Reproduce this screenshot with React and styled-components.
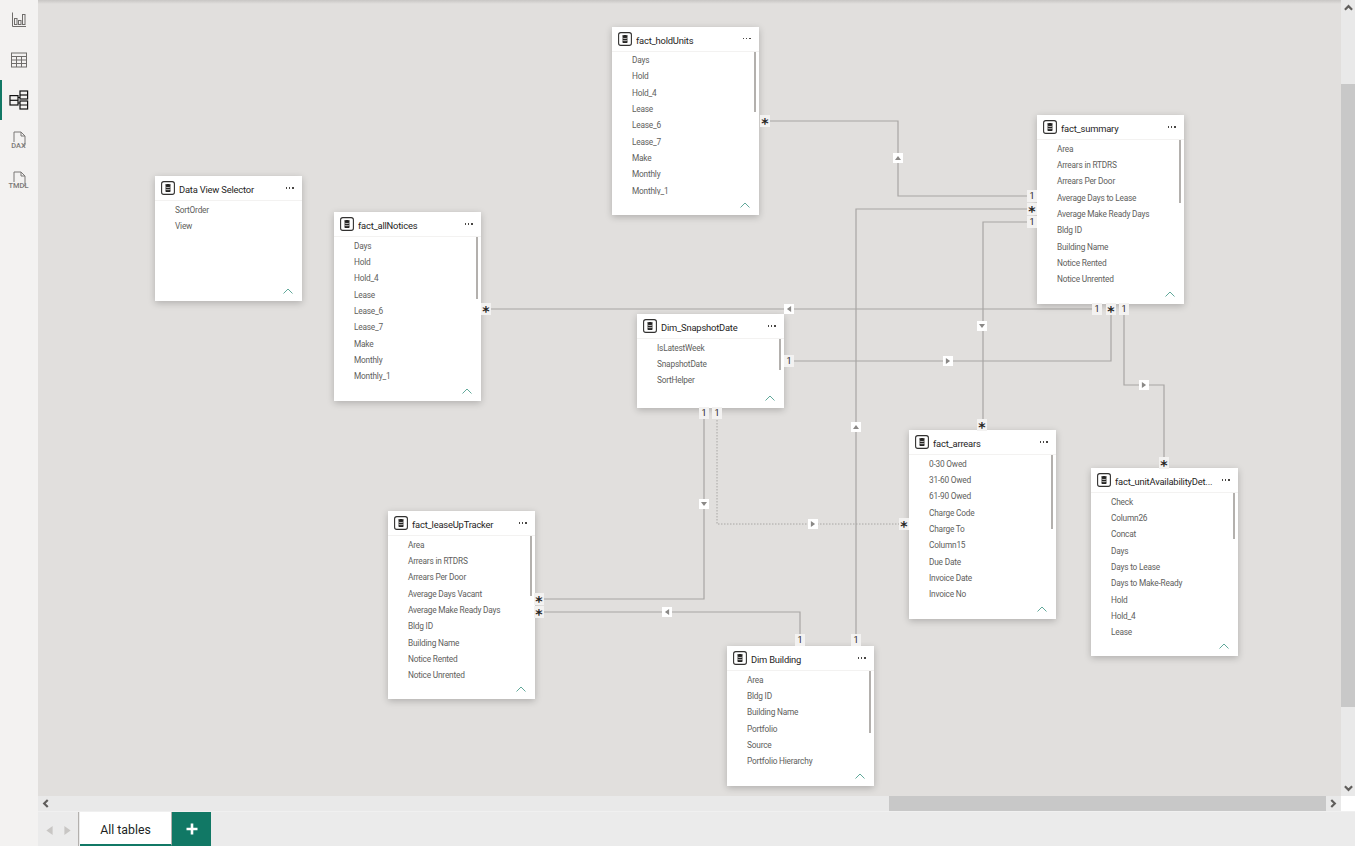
import React from 'react'
import styled, { createGlobalStyle } from 'styled-components'

const SIDEBAR = 38

const GlobalStyle = createGlobalStyle`
  html, body { margin: 0; padding: 0; height: 100%; overflow: hidden; }
  body { font-family: Roboto, "Noto Sans", "Liberation Sans", sans-serif; background: #f3f2f1; }
`

const Page = styled.div`
  display: grid;
  grid-template-columns: ${SIDEBAR}px 1fr;
  width: 1355px;
  height: 846px;
  overflow: hidden;
`

const Sidebar = styled.nav`
  display: flex;
  flex-direction: column;
  background: #f3f2f1;
`

const NavButton = styled.div`
  height: 40px;
  display: flex;
  align-items: center;
  justify-content: center;
  box-sizing: border-box;
  border-left: 2px solid ${p => (p.$active ? '#117865' : 'transparent')};
  padding-right: 2px;
`

const Right = styled.div`
  display: flex;
  flex-direction: column;
  min-width: 0;
`

const Middle = styled.div`
  display: flex;
  height: 796px;
`

const Canvas = styled.div`
  position: relative;
  flex: 1;
  background: #e1dfdd;
  overflow: hidden;
`

const TopShade = styled.div`
  position: absolute;
  top: 0;
  left: 0;
  right: 0;
  height: 4px;
  background: linear-gradient(#c8c6c4, #e1dfdd);
  z-index: 5;
`

const Lines = styled.svg`
  position: absolute;
  top: 0;
  left: 0;
  width: 100%;
  height: 100%;
`

const Marker = styled.div`
  position: absolute;
  left: ${p => p.$x - SIDEBAR - 5}px;
  top: ${p => p.$y - 6}px;
  width: 10px;
  height: 12px;
  background: #f3f2f1;
  color: #252423;
  display: flex;
  align-items: center;
  justify-content: center;
  overflow: hidden;
  font-family: ${p => (p.$many ? '"DejaVu Sans", sans-serif' : 'Roboto, sans-serif')};
  font-size: ${p => (p.$many ? '14px' : '9px')};
  font-weight: ${p => (p.$many ? 700 : 400)};
  line-height: 12px;
  z-index: 2;
  padding-top: ${p => (p.$many ? '4px' : '0')};
  box-sizing: border-box;
`

const ArrowBox = styled.div`
  position: absolute;
  left: ${p => p.$x - SIDEBAR - 5}px;
  top: ${p => p.$y - 5}px;
  width: 10px;
  height: 10px;
  background: #ffffff;
  display: flex;
  align-items: center;
  justify-content: center;
  z-index: 2;
`

const Card = styled.div`
  position: absolute;
  left: ${p => p.$x - SIDEBAR}px;
  top: ${p => p.$y}px;
  width: 147px;
  height: ${p => p.$h}px;
  background: #ffffff;
  box-shadow: 0 2px 7px rgba(0, 0, 0, 0.22);
  display: flex;
  flex-direction: column;
  z-index: 1;
`

const CardHeader = styled.div`
  height: 24px;
  flex: none;
  display: flex;
  align-items: center;
  padding-left: 6px;
  border-bottom: 1px solid #f3f2f1;
  gap: 4px;
`

const CardTitle = styled.span`
  font-size: 9.4px;
  letter-spacing: -0.2px;
  color: #252423;
  width: 103px;
  padding-top: 3px;
  white-space: nowrap;
  overflow: hidden;
`

const Dots = styled.span`
  display: flex;
  gap: 2px;
`

const Dot = styled.i`
  width: 1.2px;
  height: 1.2px;
  background: #484644;
`

const Rows = styled.div`
  flex: 1;
  min-height: 0;
  overflow: hidden;
  padding-top: 0.5px;
`

const Row = styled.div`
  height: 16.35px;
  line-height: 16.35px;
  padding-left: 20px;
  font-size: 8.3px;
  letter-spacing: -0.2px;
  color: #605e5c;
  white-space: nowrap;
`

const Thumb = styled.div`
  position: absolute;
  top: 25px;
  right: 3px;
  width: 2.5px;
  height: ${p => p.$h}px;
  background: #b3b0ad;
`

const CardFooter = styled.div`
  height: 20px;
  flex: none;
  display: flex;
  justify-content: flex-end;
  align-items: center;
  padding-right: 9px;
`

const VScroll = styled.div`
  width: 14px;
  background: #e9e9e9;
  position: relative;
  display: flex;
  flex-direction: column;
  justify-content: space-between;
  align-items: center;
  padding: 3px 0 3px;
  box-sizing: border-box;
`

const VThumb = styled.div`
  position: absolute;
  left: 0;
  top: 84px;
  width: 14px;
  height: 623px;
  background: #c8c8c8;
`

const HScroll = styled.div`
  height: 15px;
  display: flex;
  background: #e9e9e9;
  align-items: stretch;
`

const HArrow = styled.div`
  width: ${p => p.$w}px;
  display: flex;
  align-items: center;
  justify-content: center;
`

const HThumb = styled.div`
  width: 437px;
  margin-left: 837px;
  background: #c8c8c8;
`

const Corner = styled.div`
  width: 14px;
  background: #ffffff;
`

const TabBar = styled.div`
  height: 35px;
  display: flex;
  background: #ebebeb;
  border-top: 1px solid #f0f0f0;
  box-sizing: border-box;
`

const TabNav = styled.div`
  width: 41px;
  display: flex;
  align-items: center;
  justify-content: space-around;
  padding: 2px 2px 0;
  box-sizing: border-box;
  border-right: 1px solid #b3b0ad;
`

const Tab = styled.div`
  width: 92px;
  margin-left: 1px;
  display: flex;
  align-items: center;
  justify-content: center;
  background: #ffffff;
  color: #201f1e;
  font-size: 12.3px;
  padding-top: 4px;
  box-sizing: border-box;
  border-bottom: 2px solid #117865;
  border-right: 1px solid #b3b0ad;
`

const AddTab = styled.div`
  width: 39px;
  background: #117865;
  display: flex;
  align-items: center;
  justify-content: center;
`

const Chevron = ({ dir, color = '#605e5c', size = 9 }) => {
  const rot = { up: 0, right: 90, down: 180, left: 270 }[dir]
  return (
    <svg width={size} height={size} viewBox="0 0 10 10">
      <path d="M1 7.5 5 3.5 9 7.5" fill="none" stroke={color} strokeWidth="2.4" transform={`rotate(${rot} 5 5)`} />
    </svg>
  )
}

const Triangle = ({ dir, color = '#8a8886', size = 6 }) => {
  const rot = { up: 0, right: 90, down: 180, left: 270 }[dir]
  return (
    <svg width={size} height={size} viewBox="0 0 10 10">
      <path d="M5 1.5 10 8.5H0Z" fill={color} transform={`rotate(${rot} 5 5)`} />
    </svg>
  )
}

const ReportIcon = () => (
  <svg width="18" height="18" viewBox="0 0 18 18" fill="none" stroke="#6f6d6b" strokeWidth="1">
    <path d="M2.5 1.5V15.5H16" />
    <rect x="4.5" y="7.5" width="2.5" height="6" />
    <rect x="8.5" y="9.5" width="2.5" height="4" />
    <rect x="12.5" y="3.5" width="2.5" height="10" />
  </svg>
)

const TableIcon = () => (
  <svg width="18" height="18" viewBox="0 0 18 18" fill="none" stroke="#6f6d6b" strokeWidth="1">
    <rect x="1.5" y="2" width="15" height="14" />
    <path d="M1.5 5.5H16.5M1.5 9H16.5M1.5 12.5H16.5M6.5 5.5V16M11.5 5.5V16" />
  </svg>
)

const ModelIcon = () => (
  <svg width="20" height="20" viewBox="0 0 20 20" fill="none" stroke="#111111" strokeWidth="1.2">
    <rect x="1" y="5.6" width="8" height="9.4" />
    <path d="M1 10.3H9" />
    <rect x="11" y="1" width="7.6" height="8" />
    <path d="M11 5H18.6" />
    <rect x="11" y="11" width="7.6" height="8" />
    <path d="M11 15H18.6M9 7.5H11M9 13H11" />
  </svg>
)

const FileIcon = ({ label }) => (
  <svg width="24" height="24" viewBox="0 0 24 24" fill="none" style={{ marginLeft: -1, marginTop: 2 }}>
    <path d="M7 13V3H14L18 7V15.5Q18 17 16.5 17.5M14 3V7H18" stroke="#7a7876" strokeWidth="1" />
    <text x="11.5" y="19" textAnchor="middle" fontSize="7.4" fontWeight="500" fill="#7a7876" fontFamily="Roboto, sans-serif">{label}</text>
  </svg>
)

const TableGlyph = () => (
  <svg width="14" height="14" viewBox="0 0 14 14" style={{ flex: 'none' }}>
    <rect x="0.6" y="0.6" width="12.8" height="12.8" rx="2.2" fill="none" stroke="#323130" strokeWidth="1.1" />
    <path d="M4.5 3.6c0-.8 5-.8 5 0v6.8c0 .8-5 .8-5 0Z" fill="#252423" />
    <path d="M4.5 6c.8.7 4.2.7 5 0M4.5 8.2c.8.7 4.2.7 5 0" stroke="#ffffff" strokeWidth=".7" fill="none" />
  </svg>
)

const summaryRows = ['Area', 'Arrears in RTDRS', 'Arrears Per Door', 'Average Days to Lease', 'Average Make Ready Days', 'Bldg ID', 'Building Name', 'Notice Rented', 'Notice Unrented']
const noticeRows = ['Days', 'Hold', 'Hold_4', 'Lease', 'Lease_6', 'Lease_7', 'Make', 'Monthly', 'Monthly_1']

const cards = [
  { title: 'Data View Selector', x: 155, y: 176, h: 125, rows: ['SortOrder', 'View'] },
  { title: 'fact_allNotices', x: 334, y: 212, h: 189, rows: noticeRows, thumb: 62 },
  { title: 'fact_holdUnits', x: 612, y: 26.5, h: 188.5, rows: noticeRows, thumb: 60 },
  { title: 'fact_summary', x: 1037, y: 115, h: 189, rows: summaryRows, thumb: 63 },
  { title: 'Dim_SnapshotDate', x: 637, y: 314, h: 94, rows: ['IsLatestWeek', 'SnapshotDate', 'SortHelper'], thumb: 31 },
  { title: 'fact_arrears', x: 909, y: 430, h: 189, rows: ['0-30 Owed', '31-60 Owed', '61-90 Owed', 'Charge Code', 'Charge To', 'Column15', 'Due Date', 'Invoice Date', 'Invoice No'], thumb: 74 },
  { title: 'fact_unitAvailabilityDet...', x: 1091, y: 468, h: 188, rows: ['Check', 'Column26', 'Concat', 'Days', 'Days to Lease', 'Days to Make-Ready', 'Hold', 'Hold_4', 'Lease'], thumb: 46 },
  { title: 'fact_leaseUpTracker', x: 388, y: 511, h: 188, rows: ['Area', 'Arrears in RTDRS', 'Arrears Per Door', 'Average Days Vacant', 'Average Make Ready Days', 'Bldg ID', 'Building Name', 'Notice Rented', 'Notice Unrented'], thumb: 60 },
  { title: 'Dim Building', x: 727, y: 646, h: 140, rows: ['Area', 'Bldg ID', 'Building Name', 'Portfolio', 'Source', 'Portfolio Hierarchy'], thumb: 62 },
]

const links = [
  { points: '760,121 898,121 898,196 1037,196' },
  { points: '856,646 856,209 1037,209' },
  { points: '1037,222 983,222 983,430' },
  { points: '481,309 1100,309' },
  { points: '784,361 1111,361 1111,304' },
  { points: '1124,304 1124,385 1164,385 1164,468' },
  { points: '704,408 704,599 535,599' },
  { points: '717,408 717,524 909,524', dotted: true },
  { points: '800,646 800,612 535,612' },
]

const markers = [
  [765, 121, 1], [1032, 196, 0], [1032, 209, 1], [1032, 222, 0], [856, 640, 0], [982, 425, 1],
  [486, 309, 1], [1097, 309, 0], [1111, 309, 1], [1124, 309, 0], [789, 361, 0], [1164, 463, 1],
  [704, 413, 0], [717, 413, 0], [539, 599, 1], [539, 612, 1], [904, 524, 1], [800, 640, 0],
]

const arrows = [
  [898, 158, 'up'], [856, 427, 'up'], [982, 326, 'down'], [789, 309, 'left'], [948, 361, 'right'],
  [1144, 385, 'right'], [704, 504, 'down'], [813, 524, 'right'], [667, 612, 'left'],
]

const shift = pts => pts.split(' ').map(p => {
  const [x, y] = p.split(',')
  return `${x - SIDEBAR},${y}`
}).join(' ')

const TableCard = ({ title, x, y, h, rows, thumb }) => (
  <Card $x={x} $y={y} $h={h}>
    <CardHeader>
      <TableGlyph />
      <CardTitle>{title}</CardTitle>
      <Dots><Dot /><Dot /><Dot /></Dots>
    </CardHeader>
    <Rows>
      {rows.map(r => <Row key={r}>{r}</Row>)}
    </Rows>
    {thumb && <Thumb $h={thumb} />}
    <CardFooter>
      <svg width="10" height="6" viewBox="0 0 10 6">
        <path d="M.5 5.5 5 1l4.5 4.5" fill="none" stroke="#4f9e8f" strokeWidth=".9" />
      </svg>
    </CardFooter>
  </Card>
)

export default function App() {
  return (
    <Page>
      <GlobalStyle />
      <Sidebar>
        <NavButton><ReportIcon /></NavButton>
        <NavButton><TableIcon /></NavButton>
        <NavButton $active><ModelIcon /></NavButton>
        <NavButton><FileIcon label="DAX" /></NavButton>
        <NavButton><FileIcon label="TMDL" /></NavButton>
      </Sidebar>
      <Right>
        <Middle>
          <Canvas>
            <TopShade />
            <Lines>
              {links.map(l => (
                <polyline
                  key={l.points}
                  points={shift(l.points)}
                  fill="none"
                  stroke="#a8a6a4"
                  strokeWidth={l.dotted ? 1 : 1.2}
                  strokeDasharray={l.dotted ? '1.5 1.5' : undefined}
                />
              ))}
            </Lines>
            {markers.map(([x, y, many]) => (
              <Marker key={`${x}-${y}`} $x={x} $y={y} $many={many}>{many ? '*' : '1'}</Marker>
            ))}
            {arrows.map(([x, y, dir]) => (
              <ArrowBox key={`${x}-${y}`} $x={x} $y={y}><Triangle dir={dir} /></ArrowBox>
            ))}
            {cards.map(c => <TableCard key={c.title} {...c} />)}
          </Canvas>
          <VScroll>
            <VThumb />
            <Chevron dir="up" />
            <Chevron dir="down" />
          </VScroll>
        </Middle>
        <HScroll>
          <HArrow $w={14}><Chevron dir="left" /></HArrow>
          <HThumb />
          <HArrow $w={15}><Chevron dir="right" /></HArrow>
          <Corner />
        </HScroll>
        <TabBar>
          <TabNav>
            <Triangle dir="left" color="#c8c6c4" size={9} />
            <Triangle dir="right" color="#c8c6c4" size={9} />
          </TabNav>
          <Tab>All tables</Tab>
          <AddTab>
            <svg width="12" height="12" viewBox="0 0 12 12">
              <path d="M6 .5v11M.5 6h11" stroke="#ffffff" strokeWidth="2.6" />
            </svg>
          </AddTab>
        </TabBar>
      </Right>
    </Page>
  )
}
